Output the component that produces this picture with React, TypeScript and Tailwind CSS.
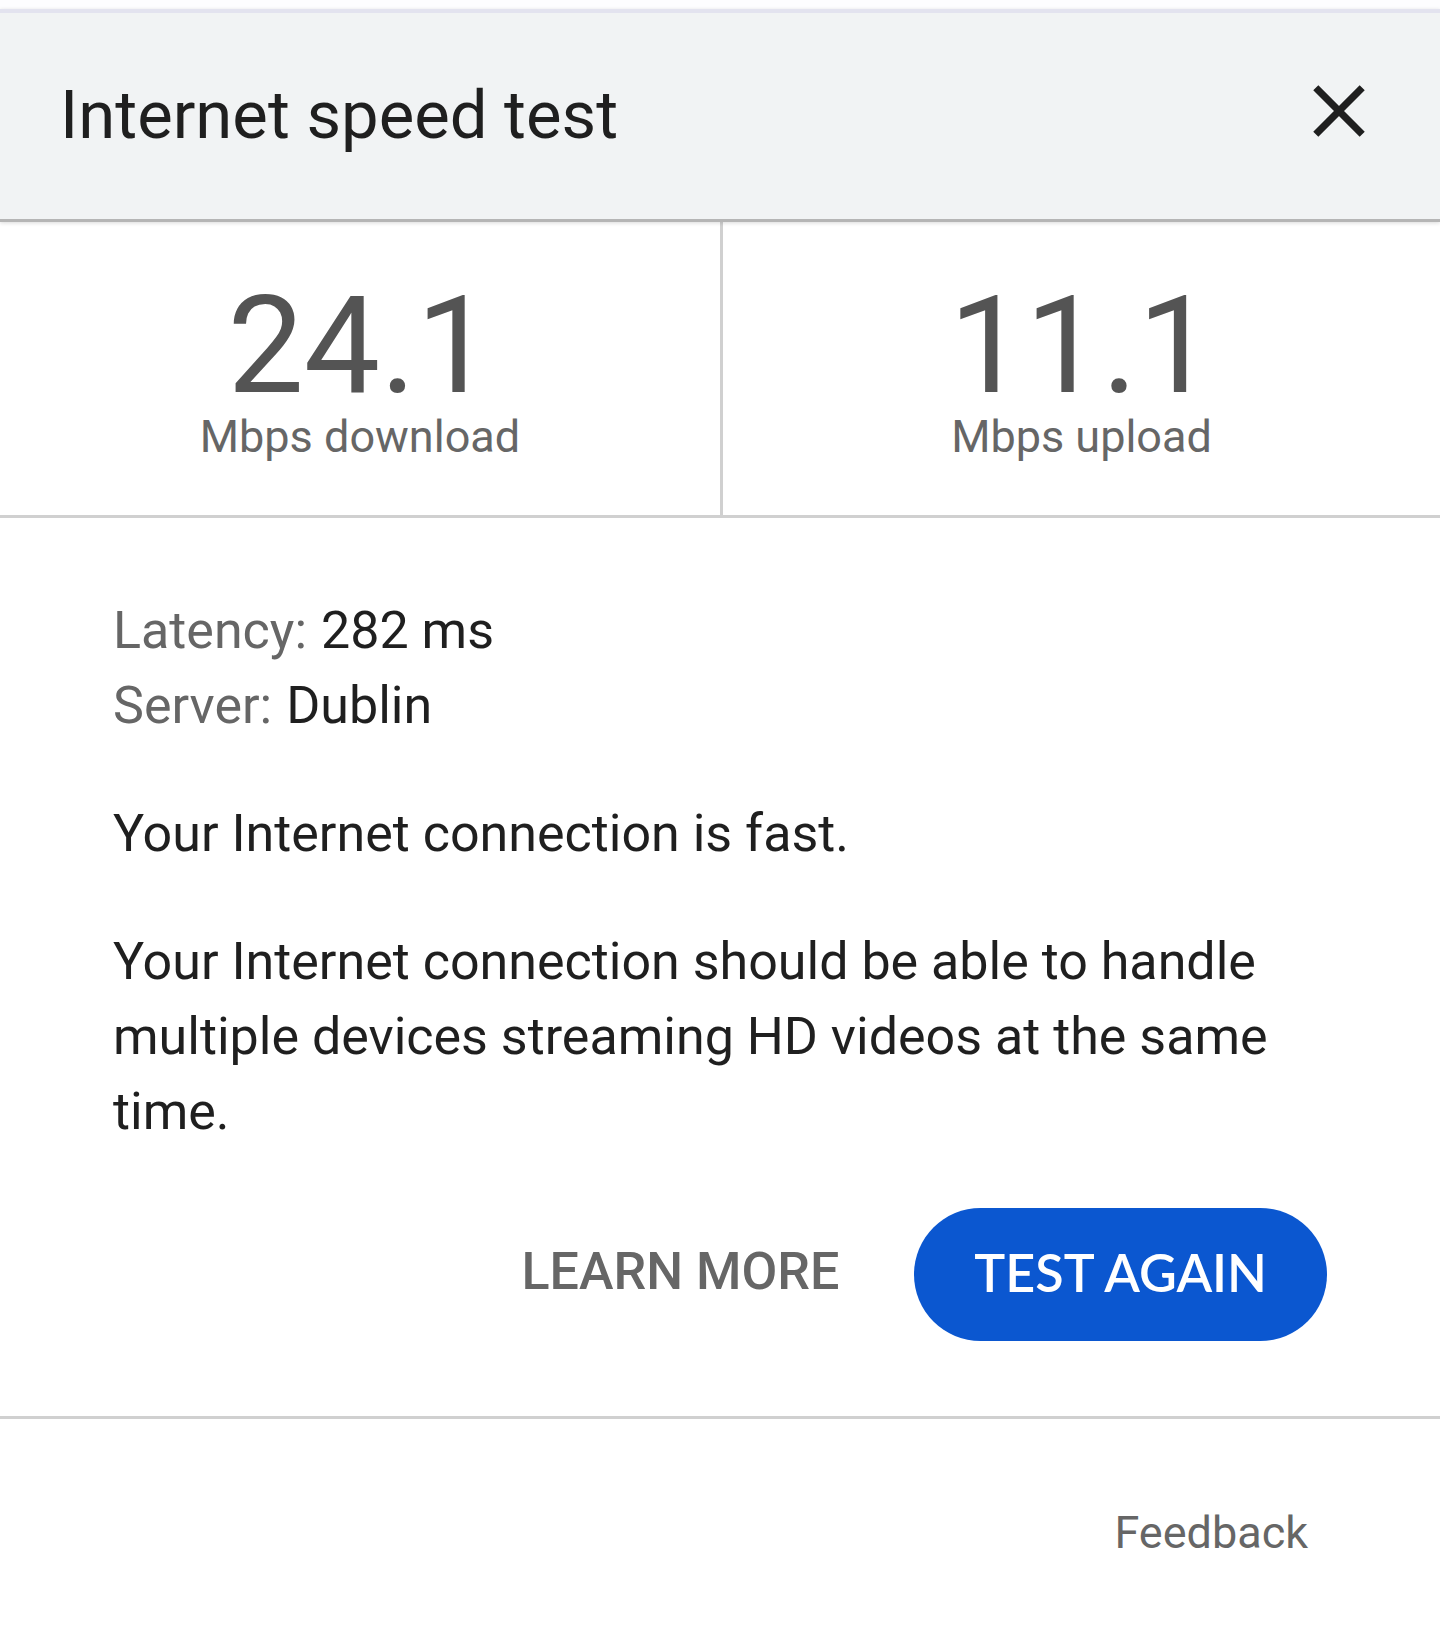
// Speed test result card: header bar, the two throughput figures,
// connection details and the actions under them.

type Figure = {
  value: string;
  unit: string;
};

const FIGURES: Figure[] = [
  { value: "24.1", unit: "Mbps download" },
  { value: "11.1", unit: "Mbps upload" },
];

const DETAILS = [
  { label: "Latency:", value: "282 ms" },
  { label: "Server:", value: "Dublin" },
];

function CloseIcon() {
  return (
    <svg viewBox="0 0 52 52" className="size-[52px]" aria-hidden="true">
      <path d="M2.8 2.8 49.2 49.2M49.2 2.8 2.8 49.2" stroke="currentColor" strokeWidth="7.2" />
    </svg>
  );
}

function Header() {
  return (
    <header className="relative flex items-start justify-between border-t-4 border-b-3 border-t-[#e3e3ef] border-b-[#b5b5b5] bg-[#f1f3f4] pt-[60px] pr-[75px] pb-[62px] pl-[60px] shadow-[0_1px_4px_rgba(0,0,0,0.15)]">
      <h1 className="text-[67px] leading-[84px]">Internet speed test</h1>
      <button type="button" aria-label="Close" className="flex h-[75px] items-center">
        <CloseIcon />
      </button>
    </header>
  );
}

function Figures() {
  return (
    <section className="grid grid-cols-2 border-b-3 border-[#d0d0d0]">
      {FIGURES.map((f) => (
        <div
          key={f.unit}
          className="flex flex-col items-center border-[#d0d0d0] pt-[60px] pb-[50px] even:border-l-3"
        >
          <div className="text-[136px] leading-[127px] text-[#545454]">{f.value}</div>
          <div className="text-[45px] leading-[56px] text-[#666666]">{f.unit}</div>
        </div>
      ))}
    </section>
  );
}

export default function App() {
  return (
    <main className="bg-white font-[Roboto,sans-serif] text-[#1f1f1f]">
      <div className="h-[9px] bg-[#fdfdff]" />
      <Header />
      <Figures />
      <section className="border-b-3 border-[#d0d0d0] px-[113px] py-[75px] text-[52px] leading-[75px]">
        <dl>
          {DETAILS.map((d) => (
            <div key={d.label} className="flex gap-[14px]">
              <dt className="text-[#666666]">{d.label}</dt>
              <dd>{d.value}</dd>
            </div>
          ))}
        </dl>
        <p className="mt-[53px]">Your Internet connection is fast.</p>
        <p className="mt-[53px]">
          Your Internet connection should be able to handle multiple devices streaming HD videos at the same time.
        </p>
        <div className="mt-[59px] flex items-start justify-end gap-[75px]">
          <button type="button" className="h-[127px] font-medium text-[#666666]">
            LEARN MORE
          </button>
          <button
            type="button"
            className="h-[133px] rounded-full bg-[#0b57d0] px-[60px] pb-[5px] font-[Lato,sans-serif] font-semibold text-white"
          >
            TEST AGAIN
          </button>
        </div>
      </section>
      <footer className="flex justify-end px-[132px] pt-[86px] pb-[60px]">
        <a href="#feedback" className="text-[45px] leading-[56px] text-[#666666]">
          Feedback
        </a>
      </footer>
    </main>
  );
}
